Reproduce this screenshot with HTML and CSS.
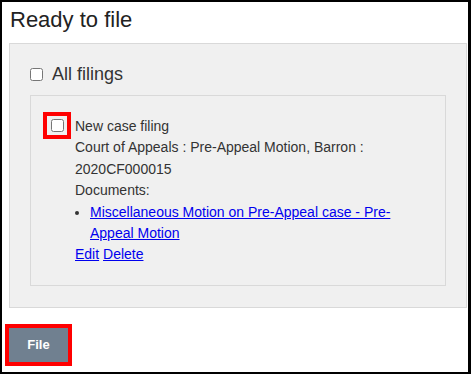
FILE: index.html
```html
<!DOCTYPE html>
<html>
<head>
<meta charset="utf-8">
<link rel="stylesheet" href="styles.css">
</head>
<body>
<div class="frame">
  <h1 class="title">Ready to file</h1>
  <div class="panel">
    <label class="all">
      <input type="checkbox" class="all-box">
      <span>All filings</span>
    </label>
    <div class="card">
      <span class="hl-box"><input type="checkbox" class="item-box"></span>
      <div class="info">
        <div>New case filing</div>
        <div>Court of Appeals : Pre-Appeal Motion, Barron : 2020CF000015</div>
        <div>Documents:</div>
        <ul class="docs">
          <li><a href="#">Miscellaneous Motion on Pre-Appeal case - Pre-Appeal Motion</a></li>
        </ul>
        <div class="actions"><a href="#">Edit</a> <a href="#">Delete</a></div>
      </div>
    </div>
  </div>
  <button class="file-btn">File</button>
</div>
</body>
</html>
```

FILE: styles.css
```css
html, body {
  margin: 0;
  padding: 0;
  background: #fff;
}
body {
  font-family: "Liberation Sans", Arial, sans-serif;
  color: #333;
}
.frame {
  box-sizing: border-box;
  width: 471px;
  height: 374px;
  border-style: solid;
  border-color: #000;
  border-width: 2px 3px 2px 2px;
  padding: 0 0 0 7px;
  overflow: hidden;
}
.title {
  margin: 0;
  padding: 5px 0 0 1px;
  height: 36px;
  box-sizing: border-box;
  font-size: 22px;
  font-weight: normal;
  line-height: 25px;
  color: #222;
}
.panel {
  margin-top: 5px;
  width: 458px;
  box-sizing: border-box;
  background: #f0f0f0;
  border: 1px solid #d9d9d9;
  padding: 18px 20px 21px 20px;
}
.all {
  display: flex;
  align-items: center;
  gap: 9px;
  font-size: 18px;
  height: 24px;
  margin-bottom: 9px;
}
.all-box {
  margin: 0;
  width: 13px;
  height: 13px;
}
.card {
  display: flex;
  align-items: flex-start;
  border: 1px solid #d9d9d9;
  padding: 16px 16px 19px 12px;
  font-size: 14px;
  line-height: 21.4px;
}
.hl-box {
  display: inline-flex;
  outline: 4px solid #ff0000;
  margin: 4px 8px 0 4px;
  padding: 3px 3px 3px 4px;
}
.item-box {
  margin: 0;
  width: 13px;
  height: 13px;
}
.info {
  flex: 1;
  margin-top: 4px;
}
.docs {
  margin: 0;
  padding-left: 15px;
}
.docs a, .actions a {
  color: #0000ee;
}
.file-btn {
  margin-top: 20px;
  margin-left: 0;
  width: 59px;
  height: 34px;
  border: none;
  background: #708090;
  color: #fff;
  font-family: "Liberation Sans", Arial, sans-serif;
  font-weight: bold;
  font-size: 13px;
  outline: 4px solid #ff0000;
}
```
